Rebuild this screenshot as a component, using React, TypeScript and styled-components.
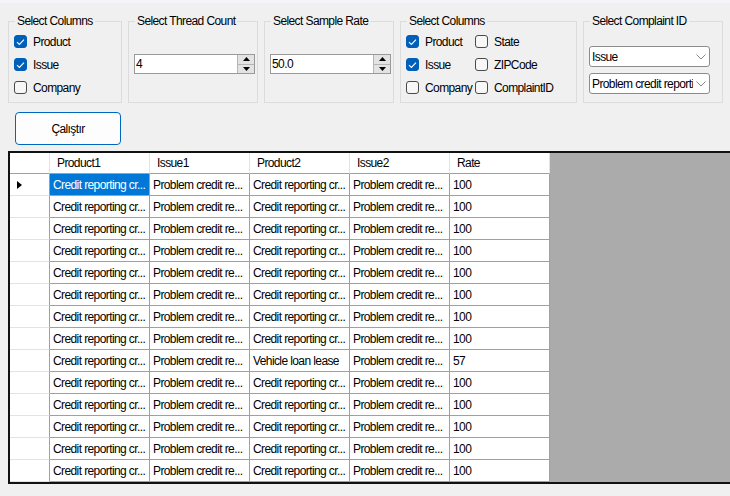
import React from "react";
import styled, { createGlobalStyle } from "styled-components";

const Global = createGlobalStyle`
  html, body { margin: 0; padding: 0; background: #f0f0f0; overflow: hidden; }
  body {
    font-family: "Liberation Sans", Arial, sans-serif;
    font-size: 12px;
    letter-spacing: -0.6px;
    color: #000;
  }
  * { box-sizing: border-box; }
`;

const Window = styled.div`
  width: 730px;
  height: 496px;
  background: #f0f0f0;
  display: flex;
  flex-direction: column;
  overflow: hidden;
`;

const TopStrip = styled.div`
  height: 3px;
  flex: none;
  background: #f4f5f9;
`;

const Controls = styled.div`
  display: flex;
  gap: 6px;
  padding: 11px 0 0 8px;
  flex: none;
`;

const Group = styled.fieldset<{ $w: number }>`
  width: ${(p) => p.$w}px;
  height: 89px;
  margin: 0;
  padding: 0 5px;
  min-width: 0;
  border: 1px solid #dcdcdc;
  display: flex;
  flex-direction: column;
`;

const Title = styled.legend`
  padding: 0 2px;
  margin-left: 1px;
  line-height: 15px;
  white-space: nowrap;
`;

const CheckList = styled.div<{ $cols: number }>`
  display: grid;
  grid-template-columns: ${(p) => (p.$cols === 2 ? "69px 1fr" : "1fr")};
  grid-auto-flow: column;
  grid-template-rows: repeat(3, 23px);
  padding-top: 1px;
`;

const CheckRow = styled.label`
  display: flex;
  align-items: center;
  gap: 6px;
  height: 23px;
  white-space: nowrap;
`;

const Box = styled.span<{ $on: boolean }>`
  width: 13px;
  height: 13px;
  flex: none;
  border-radius: 3px;
  display: flex;
  align-items: center;
  justify-content: center;
  background: ${(p) => (p.$on ? "#005fb8" : "#f7f7f7")};
  border: 1px solid ${(p) => (p.$on ? "#005fb8" : "#4a4a4a")};
`;

const Numeric = styled.div`
  margin-top: 25px;
  width: 121px;
  height: 20px;
  display: flex;
  background: #fff;
  border: 1px solid #9a9a9a;
`;

const NumValue = styled.span`
  flex: 1;
  padding-left: 1px;
  line-height: 18px;
`;

const Spinner = styled.div`
  width: 17px;
  display: flex;
  flex-direction: column;
  border-left: 1px solid #b5b5b5;
  background: #e6e6e6;
`;

const SpinButton = styled.div<{ $down?: boolean }>`
  flex: 1;
  display: flex;
  align-items: center;
  justify-content: center;
  border-top: ${(p) => (p.$down ? "1px solid #b5b5b5" : "none")};
  background: #e3e3e3;
`;

const Combos = styled.div`
  margin-top: 17px;
  display: flex;
  flex-direction: column;
  gap: 6px;
`;

const Combo = styled.div`
  width: 121px;
  height: 21px;
  display: flex;
  align-items: center;
  background: #fff;
  border: 1px solid #8c8c8c;
  border-radius: 3px;
  padding: 0 3px 0 2px;
  gap: 3px;
`;

const ComboText = styled.span`
  flex: 1;
  overflow: hidden;
  white-space: nowrap;
`;

const RunButton = styled.button`
  margin: 9px 0 0 15px;
  width: 106px;
  height: 33px;
  flex: none;
  background: #fdfdfd;
  border: 1px solid #0067c0;
  border-radius: 4px;
  font: inherit;
  letter-spacing: inherit;
  color: #000;
  padding: 0;
`;

const GridFrame = styled.div`
  margin: 6px 0 0 8px;
  width: 730px;
  flex: none;
  border: 2px solid #111;
  background: #ababab;
`;

const GridRow = styled.div<{ $h: number }>`
  display: flex;
  height: ${(p) => p.$h}px;
`;

const CornerCell = styled.div`
  width: 40px;
  background: #fff;
  border-right: 1px solid #e3e3e3;
  border-bottom: 1px solid #a0a0a0;
`;

const HeadCell = styled.div`
  width: 100px;
  background: #fff;
  border-right: 1px solid #e3e3e3;
  border-bottom: 1px solid #a0a0a0;
  padding: 1px 0 0 7px;
  line-height: 19px;
  white-space: nowrap;
`;

const RowHead = styled.div`
  width: 40px;
  background: #fff;
  border-right: 1px solid #a0a0a0;
  border-bottom: 1px solid #e3e3e3;
  display: flex;
  align-items: center;
  padding: 1px 0 0 7px;
`;

const Cell = styled.div<{ $sel?: boolean }>`
  width: 100px;
  background: ${(p) => (p.$sel ? "#0078d7" : "#fff")};
  color: ${(p) => (p.$sel ? "#fff" : "#000")};
  border-right: 1px solid #a0a0a0;
  border-bottom: 1px solid #a0a0a0;
  padding: 1px 0 0 3px;
  line-height: 20px;
  white-space: nowrap;
  overflow: hidden;
`;

const Check = () => (
  <svg width="9" height="8" viewBox="0 0 9 8">
    <path d="M1 4.2 L3.4 6.5 L8 1.6" fill="none" stroke="#fff" strokeWidth="1.1" />
  </svg>
);

const Chevron = () => (
  <svg width="10" height="6" viewBox="0 0 10 6">
    <path d="M0.5 0.5 L5 5 L9.5 0.5" fill="none" stroke="#8a8a8a" strokeWidth="1" />
  </svg>
);

const Tri = ({ down }: { down?: boolean }) => (
  <svg width="7" height="4" viewBox="0 0 7 4">
    <path d={down ? "M0 0 H7 L3.5 4 Z" : "M0 4 H7 L3.5 0 Z"} fill="#000" />
  </svg>
);

const Arrow = () => (
  <svg width="5" height="8" viewBox="0 0 5 8">
    <path d="M0 0 L5 4 L0 8 Z" fill="#000" />
  </svg>
);

const CB = ({ label, on }: { label: string; on?: boolean }) => (
  <CheckRow>
    <Box $on={!!on}>{on && <Check />}</Box>
    {label}
  </CheckRow>
);

const Num = ({ value }: { value: string }) => (
  <Numeric>
    <NumValue>{value}</NumValue>
    <Spinner>
      <SpinButton>
        <Tri />
      </SpinButton>
      <SpinButton $down>
        <Tri down />
      </SpinButton>
    </Spinner>
  </Numeric>
);

const cols = ["Product1", "Issue1", "Product2", "Issue2", "Rate"];

const rows = Array.from({ length: 14 }, (_, i) => [
  "Credit reporting cr...",
  "Problem credit re...",
  i === 8 ? "Vehicle loan lease" : "Credit reporting cr...",
  "Problem credit re...",
  i === 8 ? "57" : "100",
]);

export default function App() {
  return (
    <Window>
      <Global />
      <TopStrip />
      <Controls>
        <Group $w={114}>
          <Title>Select Columns</Title>
          <CheckList $cols={1}>
            <CB label="Product" on />
            <CB label="Issue" on />
            <CB label="Company" />
          </CheckList>
        </Group>
        <Group $w={130}>
          <Title>Select Thread Count</Title>
          <Num value="4" />
        </Group>
        <Group $w={130}>
          <Title>Select Sample Rate</Title>
          <Num value="50.0" />
        </Group>
        <Group $w={177}>
          <Title>Select Columns</Title>
          <CheckList $cols={2}>
            <CB label="Product" on />
            <CB label="Issue" on />
            <CB label="Company" />
            <CB label="State" />
            <CB label="ZIPCode" />
            <CB label="ComplaintID" />
          </CheckList>
        </Group>
        <Group $w={140}>
          <Title>Select Complaint ID</Title>
          <Combos>
            <Combo>
              <ComboText>Issue</ComboText>
              <Chevron />
            </Combo>
            <Combo>
              <ComboText>Problem credit reporti</ComboText>
              <Chevron />
            </Combo>
          </Combos>
        </Group>
      </Controls>
      <RunButton>Çalıştır</RunButton>
      <GridFrame>
        <GridRow $h={21}>
          <CornerCell />
          {cols.map((c) => (
            <HeadCell key={c}>{c}</HeadCell>
          ))}
        </GridRow>
        {rows.map((r, i) => (
          <GridRow $h={22} key={i}>
            <RowHead>{i === 0 && <Arrow />}</RowHead>
            {r.map((v, j) => (
              <Cell key={j} $sel={i === 0 && j === 0}>
                {v}
              </Cell>
            ))}
          </GridRow>
        ))}
      </GridFrame>
    </Window>
  );
}
